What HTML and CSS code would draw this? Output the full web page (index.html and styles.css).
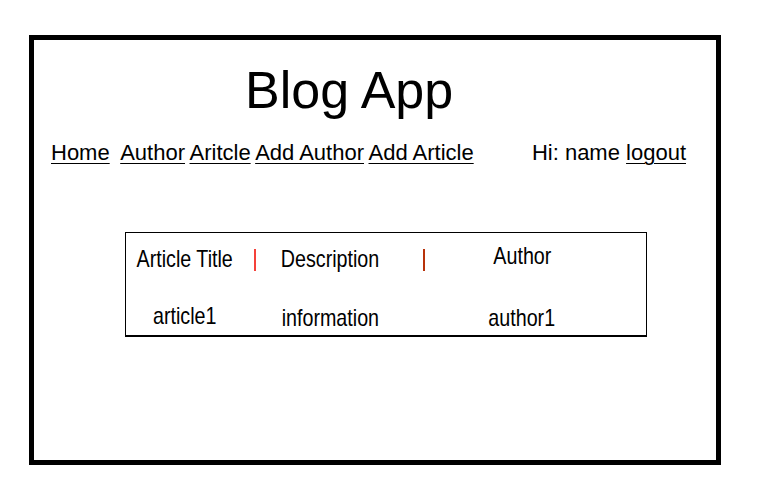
FILE: index.html
```html
<!DOCTYPE html>
<html lang="en">
<head>
<meta charset="utf-8">
<title>Blog App</title>
<link rel="stylesheet" href="styles.css">
</head>
<body>
<div class="frame">
  <h1 class="title">Blog App</h1>
  <nav class="nav">
    <div class="nav-links">
      <a href="#" class="nav-home">Home</a>
      <a href="#">Author</a>
      <a href="#">Aritcle</a>
      <a href="#">Add Author</a>
      <a href="#">Add Article</a>
    </div>
    <div class="user">Hi: name <a href="#">logout</a></div>
  </nav>
  <div class="table">
    <div class="cell head c1"><span class="narrow">Article Title</span></div>
    <div class="sep sep-a"></div>
    <div class="cell head c3"><span class="narrow">Description</span></div>
    <div class="sep sep-b"></div>
    <div class="cell head c5 head-up"><span class="narrow">Author</span></div>
    <div class="cell c1 row-up"><span class="narrow">article1</span></div>
    <div class="cell c3"><span class="narrow">information</span></div>
    <div class="cell c5"><span class="narrow">author1</span></div>
  </div>
</div>
</body>
</html>
```
FILE: styles.css
```css
html, body {
  margin: 0;
  padding: 0;
  background: #fff;
}
body {
  font-family: "Liberation Sans", Arial, sans-serif;
  color: #000;
}
.frame {
  box-sizing: border-box;
  margin: 35px 0 0 29px;
  width: 692px;
  height: 430px;
  border: 5px solid #000;
  padding-top: 21px;
}
.title {
  margin: 0;
  padding-left: 211px;
  font-size: 52px;
  line-height: 58px;
  font-weight: normal;
}
.nav {
  display: flex;
  justify-content: space-between;
  margin-top: 22px;
  padding: 0 30px 0 17px;
  font-size: 22px;
  line-height: 24px;
}
.nav a {
  color: #000;
  text-decoration: underline;
  text-underline-offset: 3px;
  text-decoration-thickness: 1px;
}
.nav-links {
  display: flex;
  gap: 4.5px;
}
.nav-home {
  margin-right: 6px;
}
.table {
  box-sizing: border-box;
  margin: 67px 0 0 91px;
  width: 522px;
  height: 105px;
  border: 1px solid #000;
  border-bottom-width: 2px;
  padding-top: 12px;
  display: grid;
  grid-template-columns: 118px 22px 128px 60px 132px 1fr;
  grid-template-rows: 28px 28px;
  row-gap: 31px;
  font-family: "Liberation Sans", Arial, sans-serif;
  font-size: 24px;
  line-height: 28px;
}
.cell {
  text-align: center;
  white-space: nowrap;
}
.narrow {
  display: inline-block;
  transform: scaleX(0.82);
  transform-origin: center;
}
.c1 { grid-column: 1; }
.c3 { grid-column: 3; }
.c5 { grid-column: 5; margin-left: 2px; margin-right: -2px; }
.head { grid-row: 1; }
.head-up { margin-top: -3px; }
.row-up { margin-top: -2px; }
.sep {
  grid-row: 1;
  justify-self: center;
  width: 2px;
  height: 22px;
  margin-top: 4px;
}
.sep-a { grid-column: 2; background: #f5413a; }
.sep-b { grid-column: 4; background: #b8320a; }
```
